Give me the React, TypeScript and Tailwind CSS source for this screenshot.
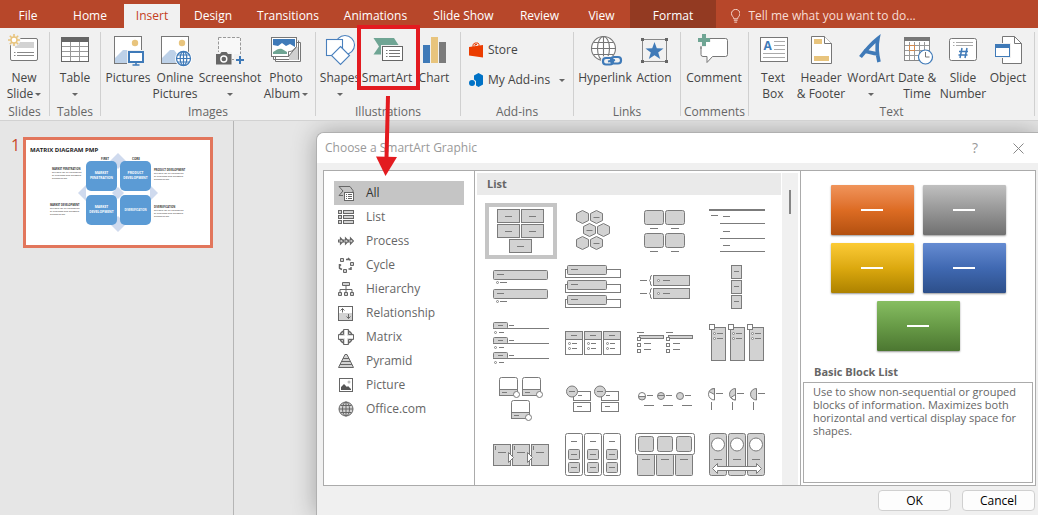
import React from 'react';

const LINE = '#7b7b7b';
const FILL = '#d2d2d2';
const BLUE = '#3f7ab8';
const TAN = '#e8c47d';
const GREEN = '#6fa594';

const steps = [0, 1, 2];

/* ---------- Drawing helpers ---------- */

type BoxProps = { x: number; y: number; w: number; h: number; r?: number; fill?: string };

const Box = ({ x, y, w, h, r = 0, fill = FILL }: BoxProps) => (
  <rect x={x + 0.5} y={y + 0.5} width={w} height={h} rx={r} fill={fill} stroke={LINE} />
);

const Dash = ({ x, y, w = 7 }: { x: number; y: number; w?: number }) => (
  <path d={`M${x} ${y + 0.5}h${w}`} stroke={LINE} fill="none" />
);

const Dot = ({ x, y }: { x: number; y: number }) => (
  <circle cx={x + 0.5} cy={y + 0.5} r="1" fill="#fff" stroke={LINE} strokeWidth="0.9" />
);

const Move = ({ x = 0, y = 0, children }: { x?: number; y?: number; children: React.ReactNode }) => (
  <g transform={`translate(${x} ${y})`}>{children}</g>
);

const Caret = () => (
  <svg width="6" height="3" viewBox="0 0 6 3" className="shrink-0">
    <path d="M0 0h6L3 3z" fill="#666" />
  </svg>
);

/* ---------- Ribbon icons, all on a 32px canvas ---------- */

const icons: Record<string, React.ReactNode> = {
  newSlide: (
    <>
      <rect x="2.5" y="4.5" width="27" height="22" rx="1.5" fill="#fff" stroke="#777" />
      <path d="M12 8h14v6H7v-2z" fill="#d2d2d2" />
      <path d="M6 18.5h1.5M9 18.5h17M6 21.5h1.5M9 21.5h17" stroke="#888" />
      <circle cx="6" cy="6" r="6.5" fill="#f1f1f1" />
      <path d="M6 0v12M0 6h12M1.8 1.8l8.4 8.4M10.2 1.8l-8.4 8.4" stroke={TAN} strokeWidth="1.6" />
      <circle cx="6" cy="6" r="3" fill="#fff" stroke={TAN} strokeWidth="1.4" />
    </>
  ),
  table: (
    <>
      <rect x="2.5" y="3.5" width="27" height="24" fill="#fff" stroke="#666" />
      <path d="M2 3h28v5H2z" fill="#666" />
      <path d="M3 12.5h26M3 17.5h26M3 22.5h26M11.5 8v19M20.5 8v19" stroke="#999" />
    </>
  ),
  pictures: (
    <>
      <rect x="2.5" y="2.5" width="27" height="27" fill="#fff" stroke="#777" />
      <circle cx="23" cy="9" r="3.2" fill={TAN} />
      <path d="M3 24l8-8h4l4 5v8H3z" fill="#bdd1e8" />
      <rect x="15" y="16" width="18" height="16" fill="#f1f1f1" />
      <rect x="17" y="18" width="14" height="10" fill="#fff" stroke={BLUE} strokeWidth="2" />
      <path d="M24 28v3M20.5 31h7" stroke={BLUE} strokeWidth="1.6" />
    </>
  ),
  online: (
    <>
      <rect x="2.5" y="2.5" width="27" height="27" fill="#fff" stroke="#777" />
      <circle cx="23" cy="9" r="3.2" fill={TAN} />
      <path d="M3 24l8-8h4l4 5v8H3z" fill="#bdd1e8" />
      <circle cx="24.5" cy="24.5" r="8.5" fill="#fff" />
      <circle cx="24.5" cy="24.5" r="7" fill="#fff" stroke={BLUE} strokeWidth="1.3" />
      <ellipse cx="24.5" cy="24.5" rx="3.3" ry="7" fill="none" stroke={BLUE} strokeWidth="1.2" />
      <path d="M24.5 17.5v14M17.5 24.5h14M18.5 21h12M18.5 28h12" stroke={BLUE} strokeWidth="1.2" />
    </>
  ),
  screenshot: (
    <>
      <rect x="4.5" y="3.5" width="22" height="22" fill="#f8f8f8" stroke="#999" strokeDasharray="3 1.5" />
      <path d="M1 18h17v13H1z" fill="#f1f1f1" />
      <path d="M2 20h4l1.500-2h5l1.500 2h3.500v10.500H2z" fill="#666" />
      <circle cx="9.8" cy="25" r="3" fill="#666" stroke="#fff" strokeWidth="1.4" />
      <path d="M20 20h12v12H20z" fill="#f1f1f1" />
      <path d="M26 22v8M22 26h8" stroke={BLUE} strokeWidth="2" />
    </>
  ),
  album: (
    <>
      <path d="M5.5 22v5.500h25v-19h-4M3.500 22v3.500h25v-19" fill="#fff" stroke="#777" />
      <rect x="1.5" y="3.5" width="25" height="19" fill="#fff" stroke="#777" />
      <path d="M3 5h22v8l-5-3-4 2-4-3-4 3-5-1z" fill={BLUE} />
      <path d="M3 18c4-3 7-4 9-3l5 3v2H3z" fill={GREEN} />
      <path d="M27 13h-1l-4 3-3 6v4h9V13z" fill="#d0d0d0" />
      <path d="M26.500 12.500c-3 4-4 5-8 5v5z" fill="#fff" stroke="#777" />
    </>
  ),
  shapes: (
    <g fill="#fff" stroke="#4a80bd" strokeWidth="1.1">
      <circle cx="21" cy="11" r="9.5" />
      <rect x="2.5" y="5.5" width="16" height="16" />
      <path d="M16.500 12.500l9 9-9 9-9-9z" />
    </g>
  ),
  smartart: (
    <>
      <path d="M2.500 4H23l5.500 8.500-5 8h-21L8 12.500z" fill={GREEN} />
      <rect x="10" y="11" width="23" height="17" fill="#f1f1f1" />
      <rect x="11.5" y="12.5" width="20" height="14" fill="#fff" stroke="#666" />
      <path d="M15 16.500h1.500M18 16.500h11M15 19.500h1.500M18 19.500h11M15 22.500h1.500M18 22.500h11" stroke="#777" />
    </>
  ),
  chart: (
    <>
      <path d="M5 11h7v18H5z" fill={BLUE} />
      <path d="M13 3h7v26h-7z" fill={TAN} />
      <path d="M21 8h7v21h-7z" fill="#7b7b7b" />
    </>
  ),
  hyperlink: (
    <>
      <g fill="none" stroke="#777" strokeWidth="1.1">
        <circle cx="14.5" cy="14.5" r="12" fill="#fff" />
        <ellipse cx="14.5" cy="14.5" rx="6" ry="12" />
        <path d="M14.500 2.500v24M2.500 14.500h24M4.500 8.500h20M4.500 20.500h20" />
      </g>
      <rect x="12" y="22" width="21" height="10" rx="4" fill="#f1f1f1" />
      <rect x="14" y="24" width="10" height="6.5" rx="3" fill="none" stroke={BLUE} strokeWidth="2.2" />
      <rect x="22" y="23" width="10" height="6.5" rx="3" fill="none" stroke={BLUE} strokeWidth="2.2" />
      <path d="M19 27.500l7-1.500" stroke={BLUE} strokeWidth="2" />
    </>
  ),
  action: (
    <>
      <rect x="4.5" y="5.5" width="24" height="22" fill="none" stroke="#888" />
      <path d="M3 4h3v3H3zM27 4h3v3h-3zM3 26h3v3H3zM27 26h3v3h-3z" fill="#666" />
      <path d="M16.500 8l2.300 6.200 6.700.2-5.300 4.100 2 6.500-5.700-3.800-5.700 3.800 2-6.500-5.300-4.100 6.700-.2z" fill={BLUE} />
    </>
  ),
  comment: (
    <>
      <path
        d="M5 4.500h22.500a2 2 0 012 2v14a2 2 0 01-2 2h-13l-5.500 6v-6H5a2 2 0 01-2-2v-14a2 2 0 012-2z"
        fill="#fff"
        stroke="#777"
      />
      <path d="M-1-1h14v14H-1z" fill="#f1f1f1" />
      <path d="M8 8h5v5H8z" fill="#fff" />
      <path d="M12 4.500h2M3 12v3" stroke="#777" />
      <path d="M6 0v12M0 6h12" stroke={GREEN} strokeWidth="4" />
    </>
  ),
  textBox: (
    <>
      <rect x="3.5" y="3.5" width="27" height="24" fill="#fff" stroke="#777" />
      <text x="6.5" y="16" fontSize="12" fontWeight="700" fill={BLUE}>
        A
      </text>
      <path d="M17 7.500h11M17 11.500h11M17 15.500h11M6 19.500h22M6 23.500h22" stroke="#aaa" />
    </>
  ),
  header: (
    <>
      <path d="M6.500 2.500h13l7 7v20h-20z" fill="#fff" stroke="#777" />
      <path d="M19.500 2.500v7h7" fill="#fff" stroke="#777" />
      <path d="M9 5h8v5H9zM9 22h15v5H9z" fill={TAN} />
    </>
  ),
  wordart: (
    <path
      d="M5.500 23C11 16 16 10 23 4.500 21.500 12 22 20 24 28M9 17c5 1 9 2.500 14 3"
      fill="none"
      stroke={BLUE}
      strokeWidth="3.6"
    />
  ),
  date: (
    <>
      <rect x="3.5" y="3.5" width="25" height="23" fill="#fff" stroke="#888" />
      <path d="M3 3h26v4H3z" fill="#777" />
      <path d="M4 11.500h24M4 16.500h24M4 21.500h24M8.500 8v18M13.500 8v18M18.500 8v18M23.500 8v18" stroke="#999" />
      <rect x="8.5" y="11.5" width="5" height="5" fill="#fff" stroke="#d58a4e" />
      <circle cx="24.5" cy="23" r="7" fill="#fff" stroke={BLUE} strokeWidth="1.2" />
      <path d="M24.500 18v5h4" fill="none" stroke="#777" />
    </>
  ),
  number: (
    <>
      <rect x="2.5" y="4.5" width="27" height="22" rx="2" fill="#fff" stroke="#777" />
      <path d="M6 8.500h1.500M9 8.500h17M6 11.500h1.500M9 11.500h17" stroke="#aaa" />
      <path d="M15 14l-2 10M20 14l-2 10M12 17.500h9M11.500 21h9" stroke={BLUE} strokeWidth="1.5" />
    </>
  ),
  object: (
    <>
      <path d="M10.500 2.500h12l7 7v20h-19z" fill="#fff" stroke="#777" />
      <path d="M22.500 2.500v7h7" fill="none" stroke="#777" />
      <rect x="2" y="9" width="17" height="15" fill="#f1f1f1" />
      <rect x="3.5" y="10.5" width="14" height="12" fill="#fff" stroke={BLUE} />
      <path d="M3 10h15v4H3z" fill={BLUE} />
    </>
  ),
};

/* ---------- Ribbon ---------- */

const tabs = [
  { name: 'File', width: 'w-[56px]' },
  { name: 'Home', width: 'w-[68px]' },
  { name: 'Insert', width: 'w-[56px]' },
  { name: 'Design', width: 'w-[66px]' },
  { name: 'Transitions', width: 'w-[84px]' },
  { name: 'Animations', width: 'w-[91px]' },
  { name: 'Slide Show', width: 'w-[85px]' },
  { name: 'Review', width: 'w-[67px]' },
  { name: 'View', width: 'w-[57px]' },
  { name: 'Format', width: 'w-[86px]' },
];

const tabStyle = (name: string) => {
  if (name === 'Insert') return 'h-6 bg-[#f1f1f1] text-[#c43e1c]';
  if (name === 'Format') return 'h-7 bg-[#933a22] pt-1 text-white';
  return 'h-6 text-white';
};

type ToolProps = { icon: string; first: string; second?: string; caret?: boolean; width: string };

const Tool = ({ icon, first, second, caret, width }: ToolProps) => (
  <button className={`flex shrink-0 flex-col items-center whitespace-nowrap leading-4 ${width}`}>
    <svg width="32" height="32" viewBox="0 0 32 32" className="mb-1 overflow-visible">
      {icons[icon]}
    </svg>
    <span>{first}</span>
    <span className="flex h-4 items-center gap-0.5">
      {second}
      {caret && <Caret />}
    </span>
  </button>
);

type GroupProps = { name: string; width: string; children: React.ReactNode };

const Group = ({ name, width, children }: GroupProps) => (
  <section className={`shrink-0 pt-1 ${width}`}>
    <div className="h-[84px] border-r border-[#d0d0d0]">
      <div className="flex h-[72px] pt-0.5">{children}</div>
      <div className="text-center leading-4 text-[#666]">{name}</div>
    </div>
  </section>
);

const Ribbon = () => (
  <div className="flex h-[93px] border-b border-[#d2d2d2] bg-[#f1f1f1] text-[#444]">
    <Group name="Slides" width="w-[50px]">
      <Tool icon="newSlide" first="New" second="Slide" caret width="w-[48px]" />
    </Group>
    <Group name="Tables" width="w-[51px]">
      <Tool icon="table" first="Table" caret width="w-[50px]" />
    </Group>
    <Group name="Images" width="w-[215px]">
      <Tool icon="pictures" first="Pictures" width="w-[54px]" />
      <Tool icon="online" first="Online" second="Pictures" width="w-[40px]" />
      <Tool icon="screenshot" first="Screenshot" caret width="w-[70px]" />
      <Tool icon="album" first="Photo" second="Album" caret width="w-[42px]" />
    </Group>
    <Group name="Illustrations" width="w-[145px]">
      <Tool icon="shapes" first="Shapes" caret width="w-[48px]" />
      <Tool icon="smartart" first="SmartArt" width="w-[46px]" />
      <Tool icon="chart" first="Chart" width="w-[48px]" />
    </Group>
    <Group name="Add-ins" width="w-[113px]">
      <div className="flex w-full flex-col gap-3.5 px-2 pt-2">
        <button className="flex items-center gap-1 leading-4">
          <svg width="15" height="16" viewBox="0 0 15 16">
            <path d="M0 5l14-2v12.500L0 13.500z" fill="#eb3c00" />
            <path d="M4 5V2.500L6 1h3l1 1.500V4M6 4V2.500h2" fill="none" stroke="#eb3c00" />
          </svg>
          Store
        </button>
        <button className="flex items-center gap-1 whitespace-nowrap leading-4">
          <svg width="15" height="16" viewBox="0 0 15 16">
            <path d="M5 3.500L9.500 1 14 3.500v9L9.500 15 7 13.500V9L5 7.500z" fill="#0072c6" />
            <circle cx="3" cy="11" r="3" fill="#0072c6" />
          </svg>
          <span className="flex-1 text-left">My Add-ins</span>
          <Caret />
        </button>
      </div>
    </Group>
    <Group name="Links" width="w-[107px]">
      <Tool icon="hyperlink" first="Hyperlink" width="w-[62px]" />
      <Tool icon="action" first="Action" width="w-[36px]" />
    </Group>
    <Group name="Comments" width="w-[68px]">
      <Tool icon="comment" first="Comment" width="w-[66px]" />
    </Group>
    <Group name="Text" width="w-[286px]">
      <Tool icon="textBox" first="Text" second="Box" width="w-[48px]" />
      <Tool icon="header" first="Header" second="& Footer" width="w-[48px]" />
      <Tool icon="wordart" first="WordArt" caret width="w-[52px]" />
      <Tool icon="date" first="Date &" second="Time" width="w-[40px]" />
      <Tool icon="number" first="Slide" second="Number" width="w-[52px]" />
      <Tool icon="object" first="Object" width="w-[38px]" />
    </Group>
  </div>
);

/* ---------- Slide thumbnail ---------- */

const quadrants = [
  { x: 60, y: 21, lines: ['MARKET', 'PENETRATION'] },
  { x: 94, y: 21, lines: ['PRODUCT', 'DEVELOPMENT'] },
  { x: 60, y: 55, lines: ['MARKET', 'DEVELOPMENT'] },
  { x: 94, y: 55, lines: ['DIVERSIFICATION'] },
];

const notes = [
  { x: 26, y: 30, title: 'MARKET PENETRATION' },
  { x: 128, y: 31, title: 'PRODUCT DEVELOPMENT' },
  { x: 24, y: 66, title: 'MARKET DEVELOPMENT' },
  { x: 128, y: 68, title: 'DIVERSIFICATION' },
];

const SlideThumb = () => (
  <svg viewBox="0 0 184 105" className="block w-full bg-white">
    <text x="4" y="12" fontSize="6" fontWeight="700" fill="#222">
      MATRIX DIAGRAM PMP
    </text>
    <path d="M92 13l8 8-8 8-8-8zM92 76l8 8-8 8-8-8zM60 45l-8 8 8 8zM124 45l8 8-8 8z" fill="#cfdaee" />
    <path d="M92 47l6 6-6 6-6-6z" fill="#cfdaee" />
    <text x="75" y="20" fontSize="3" fontWeight="700" fill="#333">
      FIRST
    </text>
    <text x="106" y="20" fontSize="3" fontWeight="700" fill="#333">
      CORE
    </text>
    {quadrants.map((q) => (
      <g key={`${q.x}-${q.y}`}>
        <rect x={q.x} y={q.y} width="31" height="30" rx="5" fill="#5b9bd5" />
        {q.lines.map((line, i) => (
          <text
            key={line}
            x={q.x + 15.5}
            y={q.y + (q.lines.length === 1 ? 16 : 13 + i * 5)}
            fontSize={q.lines.length === 1 ? 2.6 : 3.3}
            fontWeight="700"
            textAnchor="middle"
            fill="#fff"
          >
            {line}
          </text>
        ))}
      </g>
    ))}
    {notes.map((n) => (
      <g key={n.title} fontSize="2.5" fill="#333">
        <text x={n.x} y={n.y} fontWeight="700">
          {n.title}
        </text>
        <text x={n.x} y={n.y + 3.2}>Suitable for all categories</text>
        <text x={n.x} y={n.y + 6.2}>of business and personal</text>
        <text x={n.x} y={n.y + 9.2}>presentation</text>
      </g>
    ))}
  </svg>
);

/* ---------- Dialog: categories ---------- */

const categories: { name: string; icon: React.ReactNode }[] = [
  {
    name: 'All',
    icon: (
      <>
        <path d="M1 1.500h11l3 4v3M1 1.500l4 4.500-4 4.500h4" fill="none" stroke="#666" />
        <rect x="6.5" y="7.5" width="9" height="8" fill="#fff" stroke="#666" />
        <path d="M8 9.500h1M10 9.500h4M8 11.500h1M10 11.500h4M8 13.500h1M10 13.500h4" stroke="#666" />
      </>
    ),
  },
  {
    name: 'List',
    icon: [1.5, 6.5, 11.5].map((y) => (
      <g key={y} fill={FILL} stroke="#666">
        <rect x="0.5" y={y} width="3" height="3" />
        <rect x="5.5" y={y} width="10" height="3" />
      </g>
    )),
  },
  {
    name: 'Process',
    icon: [0.5, 5.5, 10.5].map((x) => (
      <path key={x} d={`M${x} 7h2V5l3 3-3 3V9h-2z`} fill={FILL} stroke="#666" strokeWidth="1.2" />
    )),
  },
  {
    name: 'Cycle',
    icon: (
      <g fill={FILL} stroke="#666">
        <path d="M2.500 1.500h3v3h-3zM12.500 5.500h3v3h-3zM5.500 12.500h3v3h-3z" />
        <path d="M8 2.500h3M10 1l2.500 2.500M13 10v3M10.500 12h3M1 11l3 1.500M1.500 7v4M3 7.500L1.500 9" strokeWidth="1.5" />
      </g>
    ),
  },
  {
    name: 'Hierarchy',
    icon: (
      <g fill={FILL} stroke="#666">
        <path d="M8 5v6M2 11V8.500h12V11" fill="none" />
        <path d="M4.500 1.500h7v3h-7zM.5 11.500h3v3h-3zM6.500 11.500h3v3h-3zM12.500 11.500h3v3h-3z" />
      </g>
    ),
  },
  {
    name: 'Relationship',
    icon: (
      <>
        <rect x="0.5" y="1.5" width="14" height="14" fill="#fff" stroke="#666" />
        <path d="M1 8h13v7H1z" fill={FILL} />
        <path d="M4.500 7.500v-4M2.500 5.500l2-2 2 2M10.500 9v4.500M8.500 11.500l2 2 2-2" fill="none" stroke="#666" />
      </>
    ),
  },
  {
    name: 'Matrix',
    icon: (
      <>
        <path d="M4.500 2.500h7l2 2v7l-2 2h-7l-2-2v-7z" fill={FILL} stroke="#666" strokeWidth="1.4" />
        <path d="M5.500.500h5v5h5v5h-5v5h-5v-5h-5v-5h5z" fill={FILL} stroke="#666" />
        <path d="M8 1v14M1 8h14" stroke="#fff" strokeWidth="2.4" />
      </>
    ),
  },
  {
    name: 'Pyramid',
    icon: (
      <>
        <path d="M7 1.500h2l6.500 13H.5z" fill={FILL} stroke="#666" />
        <path d="M5 5.500h6M4 8.500h8M2 11.500h12" stroke="#666" />
      </>
    ),
  },
  {
    name: 'Picture',
    icon: (
      <>
        <rect x="1.5" y="1.5" width="13" height="13" fill="#fff" stroke="#666" />
        <circle cx="11" cy="5" r="1.5" fill="#bbb" />
        <path d="M3 13V10l3-3 3 3 1-1 3 3v1z" fill="#555" />
      </>
    ),
  },
  {
    name: 'Office.com',
    icon: (
      <g fill="none" stroke="#666">
        <circle cx="8" cy="8" r="7" fill={FILL} />
        <ellipse cx="8" cy="8" rx="3.5" ry="7" />
        <path d="M8 1v14M1 8h14M2.500 4.500h11M2.500 11.500h11" />
      </g>
    ),
  },
];

/* ---------- Dialog: layout gallery, each drawing is 72x56 ---------- */

const layouts: { name: string; art: React.ReactNode }[] = [
  {
    name: 'Basic Block List',
    art: [[12, 6], [36, 6], [12, 21], [36, 21], [24, 36]].map(([x, y]) => (
      <Move key={`${x}-${y}`} x={x} y={y}>
        <Box x={0} y={0} w={22} h={13} />
        <Dash x={8} y={7} />
      </Move>
    )),
  },
  {
    name: 'Alternating Hexagons',
    art: [[25.5, 14, 0], [39.5, 14, 1], [32.5, 27, 1], [46.5, 27, 0], [25.5, 40, 0], [39.5, 40, 1]].map(
      ([x, y, dash]) => (
        <Move key={`${x}-${y}`} x={x} y={y}>
          <path d="M0-6.500l6 3v7l-6 3-6-3v-7z" fill={FILL} stroke={LINE} />
          {dash === 1 && <Dash x={-3} y={0} w={6} />}
        </Move>
      ),
    ),
  },
  {
    name: 'Picture Caption List',
    art: [[15, 7], [36, 7], [15, 30], [36, 30]].map(([x, y]) => (
      <Move key={`${x}-${y}`} x={x} y={y}>
        <Box x={0} y={0} w={19} h={14} r={2} />
        <Dash x={6} y={18} w={8} />
      </Move>
    )),
  },
  {
    name: 'Lined List',
    art: (
      <>
        <path d="M8 7h56" stroke={LINE} strokeWidth="2" />
        <Dash x={10} y={12} />
        <Dash x={22} y={13} />
        <Dash x={19} y={20} w={45} />
        <Dash x={22} y={28} />
        <Dash x={19} y={35} w={45} />
        <Dash x={22} y={42} />
        <Dash x={19} y={48} w={45} />
      </>
    ),
  },
  {
    name: 'Vertical Bullet List',
    art: [11, 30].map((y) => (
      <Move key={y} y={y}>
        <Box x={8} y={0} w={54} h={9} r={1} />
        <Dash x={12} y={4} />
        <Dot x={12} y={12} />
        <Dash x={15} y={12} />
      </Move>
    )),
  },
  {
    name: 'Vertical Box List',
    art: steps.map((i) => (
      <Move key={i} y={i * 15}>
        <Box x={8} y={10} w={55} h={8} fill="#fff" />
        <Box x={10} y={6} w={39} h={9} r={1} />
        <Dash x={14} y={10} />
      </Move>
    )),
  },
  {
    name: 'Vertical Bracket List',
    art: [0, 13].map((y) => (
      <Move key={y} y={y}>
        <Dash x={11} y={21} />
        <path d="M23 16.500q-1.500 0-1.500 1.500v2l-1 1.500 1 1.500v2q0 1.500 1.500 1.500" fill="none" stroke={LINE} />
        <Box x={24} y={16} w={36} h={10} />
        <Dot x={29} y={21} />
        <Dash x={34} y={21} />
      </Move>
    )),
  },
  {
    name: 'Varying Width List',
    art: steps.map((i) => (
      <Move key={i} y={i * 15}>
        <Box x={30} y={6} w={10} h={13} />
        <Dash x={33} y={12} w={5} />
      </Move>
    )),
  },
  {
    name: 'Tab List',
    art: steps.map((i) => (
      <Move key={i} y={i * 15}>
        <Box x={8} y={7} w={14} h={6} r={1} />
        <Dash x={8} y={13} w={56} />
        <Dash x={13} y={10} w={5} />
        <Dash x={24} y={10} w={5} />
        <Dot x={10} y={17} />
        <Dash x={14} y={17} w={5} />
      </Move>
    )),
  },
  {
    name: 'Horizontal Bullet List',
    art: steps.map((i) => (
      <Move key={i} x={i * 19}>
        <Box x={8} y={16} w={17} h={23} fill="#fff" />
        <Box x={8} y={16} w={17} h={8} />
        <Dash x={14} y={20} w={6} />
        <Dot x={12} y={28} />
        <Dash x={15} y={28} w={5} />
        <Dot x={12} y={33} />
        <Dash x={15} y={33} w={5} />
      </Move>
    )),
  },
  {
    name: 'Square Accent List',
    art: [0, 29].map((x) => (
      <Move key={x} x={x}>
        <Dash x={8} y={17} />
        <Box x={10} y={20} w={24} h={3} />
        <Box x={8} y={22} w={3} h={3} fill="#fff" />
        <Box x={8} y={28} w={3} h={3} fill="#fff" />
        <Box x={8} y={34} w={3} h={3} fill="#fff" />
        <Dash x={15} y={28} />
        <Dash x={15} y={34} />
      </Move>
    )),
  },
  {
    name: 'Picture Accent List',
    art: steps.map((i) => (
      <Move key={i} x={i * 19}>
        <Box x={10} y={12} w={14} h={33} />
        <Box x={8} y={9} w={5} h={5} fill="#fff" />
        <Dot x={13} y={18} />
        <Dash x={16} y={18} w={6} />
        <Dot x={13} y={23} />
        <Dash x={16} y={23} w={6} />
      </Move>
    )),
  },
  {
    name: 'Bending Picture Accent List',
    art: [[0, 0], [23, 0], [12, 23]].map(([x, y]) => (
      <Move key={x} x={x} y={y}>
        <Box x={14} y={6} w={18} h={18} r={2} fill="#fff" />
        <Box x={14} y={18} w={18} h={6} />
        <Dash x={17} y={21} w={5} />
        <circle cx="31.5" cy="23.5" r="3" fill="#fff" stroke={LINE} />
      </Move>
    )),
  },
  {
    name: 'Stacked List',
    art: [0, 28].map((x) => (
      <Move key={x} x={x}>
        <Box x={16} y={20} w={17} h={9} fill="#fff" />
        <Box x={16} y={31} w={17} h={9} fill="#fff" />
        <circle cx="15" cy="20.5" r="5.5" fill={FILL} stroke={LINE} />
        <Dash x={12} y={20} w={6} />
        <Dash x={21} y={24} w={4} />
        <Dash x={20} y={35} w={5} />
      </Move>
    )),
  },
  {
    name: 'Increasing Circle Process',
    art: steps.map((i) => (
      <Move key={i} x={i * 19}>
        <circle cx="13" cy="25" r="3.5" fill={i === 0 ? '#fff' : FILL} stroke={LINE} />
        {i === 0 && <path d="M9.500 25.500a3.500 3.500 0 007 0z" fill={FILL} stroke={LINE} />}
        {i === 1 && <Dash x={10} y={24} w={6} />}
        <Dash x={18} y={24} w={6} />
        <Dash x={15} y={34} w={10} />
      </Move>
    )),
  },
  {
    name: 'Pie Process',
    art: steps.map((i) => (
      <Move key={i} x={i * 21}>
        <path d="M13.500 17.500a6 5.750 0 000 11.500z" fill={i === 0 ? '#fff' : FILL} stroke={LINE} />
        {i === 0 && <path d="M13.500 17.500q-4 0-5.500 3l5.500 3z" fill={FILL} stroke={LINE} />}
        {i === 1 && <path d="M13.500 23.500l-4.500 3q2 2.500 4.500 2.500z" fill="#fff" stroke={LINE} />}
        <Dash x={15} y={22} />
        <path d="M10.500 31v8" stroke={LINE} />
      </Move>
    )),
  },
  {
    name: 'Detailed Process',
    art: (
      <>
        {steps.map((i) => (
          <Move key={i} x={i * 19}>
            <Box x={8} y={17} w={17} h={21} />
            <path d="M10.500 19v4" stroke={LINE} />
            <Dash x={13} y={25} w={8} />
          </Move>
        ))}
        <path d="M23.500 25.500l5 5-5 5zM42.500 25.500l5 5-5 5z" fill="#fff" stroke={LINE} />
      </>
    ),
  },
  {
    name: 'Grouped List',
    art: steps.map((i) => (
      <Move key={i} x={i * 19}>
        <Box x={8} y={6} w={17} h={42} r={2} fill="#fff" />
        <Dash x={14} y={14} w={6} />
        <Box x={11} y={22} w={11} h={10} r={1} />
        <Box x={11} y={35} w={11} h={10} r={1} />
        <Dash x={14} y={27} w={6} />
        <Dash x={14} y={40} w={6} />
      </Move>
    )),
  },
  {
    name: 'Horizontal Picture List',
    art: (
      <>
        <Box x={6} y={6} w={59} h={21} r={2} fill="#fff" />
        {steps.map((i) => (
          <Move key={i} x={i * 19}>
            <Box x={8} y={27} w={17} h={21} r={1} />
            <Box x={9} y={9} w={15} h={15} r={2} />
            <Dash x={13} y={32} w={8} />
          </Move>
        ))}
      </>
    ),
  },
  {
    name: 'Continuous Picture List',
    art: (
      <>
        {steps.map((i) => (
          <Move key={i} x={i * 19}>
            <Box x={8} y={6} w={17} h={42} r={2} />
            <circle cx="17" cy="17.5" r="6.5" fill="#fff" stroke={LINE} />
            <Dash x={13} y={32} w={8} />
          </Move>
        ))}
        <path d="M11.500 41.500l5-5v3h39v-3l5 5-5 5v-3h-39v3z" fill="#fff" stroke={LINE} />
      </>
    ),
  },
];

/* ---------- Dialog: preview ---------- */

const previewBlocks = [
  'from-[#f0945a] via-[#dd6c23] to-[#b3500f]',
  'from-[#c0c0c0] via-[#979797] to-[#717171]',
  'from-[#fccb34] via-[#dca90f] to-[#ad8200]',
  'from-[#668cd2] via-[#4069b2] to-[#2d4f8a]',
  'from-[#87be62] via-[#689b47] to-[#4c7731]',
];

const SmartArtDialog = () => (
  <div
    role="dialog"
    aria-labelledby="dialog-title"
    className="flex flex-1 flex-col overflow-hidden rounded-tl-lg border-l border-t border-[#b0b0b0] bg-[#f0f0f0] shadow-[0_0_24px_rgba(0,0,0,0.3)]"
  >
    <div className="flex h-[30px] items-center bg-white pl-2 pr-3 text-[#999]">
      <h2 id="dialog-title" className="flex-1">
        Choose a SmartArt Graphic
      </h2>
      <button aria-label="Help" className="mr-7 w-4 text-sm">
        ?
      </button>
      <button aria-label="Close" className="p-0.5">
        <svg width="11" height="11" viewBox="0 0 11 11">
          <path d="M.5.5l10 10M10.5.5l-10 10" stroke="#888" />
        </svg>
      </button>
    </div>

    <div className="mx-1.5 mr-0.5 mt-[7px] flex flex-1 border border-[#ababab] bg-white text-[#666]">
      {/* Categories */}
      <nav className="w-[151px] shrink-0 border-r border-[#ababab] p-2.5">
        {categories.map((cat) => (
          <button
            key={cat.name}
            className={`flex h-6 w-full items-center gap-3 px-1 text-left ${
              cat.name === 'All' ? 'bg-[#c5c5c5] text-[#333]' : ''
            }`}
          >
            <svg width="16" height="16" viewBox="0 0 16 16" className="shrink-0">
              {cat.icon}
            </svg>
            {cat.name}
          </button>
        ))}
      </nav>

      {/* Gallery */}
      <div className="flex w-[326px] shrink-0 gap-px border-r border-[#ababab] p-0.5 pb-0">
        <div className="flex-1">
          <h3 className="h-[22px] bg-[#eaeaea] px-2.5 text-[11px] font-bold leading-[22px]">List</h3>
          <div className="grid grid-cols-4 px-2 pt-2">
            {layouts.map((layout, i) => (
              <button
                key={layout.name}
                aria-label={layout.name}
                className={i === 0 ? 'ring-4 ring-inset ring-[#c5c5c5]' : ''}
              >
                <svg width="72" height="56" viewBox="0 0 72 56">
                  {layout.art}
                </svg>
              </button>
            ))}
          </div>
        </div>
        <div className="flex w-4 justify-center bg-[#f0f0f0] pt-[17px]">
          <div className="h-6 w-0.5 bg-[#858585]" />
        </div>
      </div>

      {/* Preview */}
      <div className="flex flex-1 flex-col p-0.5">
        <div className="mt-3 flex flex-wrap justify-center gap-x-[9px] gap-y-2 px-6">
          {previewBlocks.map((gradient) => (
            <div
              key={gradient}
              className={`flex h-[50px] w-[83px] items-center justify-center rounded-[1px] bg-gradient-to-b shadow-[0_1px_2px_rgba(0,0,0,0.4)] ${gradient}`}
            >
              <span className="h-0.5 w-[22px] bg-white" />
            </div>
          ))}
        </div>
        <h3 className="mt-[13px] pl-[11px] text-[11px] font-bold leading-4">Basic Block List</h3>
        <p className="mt-0.5 flex-1 border border-[#ababab] px-[9px] py-0.5 text-[11px] leading-[13px]">
          Use to show non-sequential or grouped blocks of information. Maximizes both horizontal and vertical display
          space for shapes.
        </p>
      </div>
    </div>

    <div className="flex justify-end gap-[11px] px-[3px] py-1 text-black">
      <button className="h-[21px] w-[73px] rounded border border-[#d0d0d0] bg-[#fdfdfd]">OK</button>
      <button className="h-[21px] w-[73px] rounded border border-[#d0d0d0] bg-[#fdfdfd]">Cancel</button>
    </div>
  </div>
);

const App: React.FC = () => {
  return (
    <div className="relative flex min-h-screen flex-col overflow-hidden bg-[#e6e6e6] font-['Open_Sans','Noto_Sans',sans-serif] text-xs">
      {/* Tab strip */}
      <header className="flex h-7 bg-[#b7472a]">
        {tabs.map((tab) => (
          <button
            key={tab.name}
            className={`shrink-0 self-end whitespace-nowrap text-center ${tab.width} ${tabStyle(tab.name)}`}
          >
            {tab.name}
          </button>
        ))}
        <label className="flex flex-1 items-center gap-2 pl-[15px] pt-1 text-[#f8dcd4]">
          <svg width="10" height="14" viewBox="0 0 10 14" fill="none" stroke="currentColor">
            <path d="M3 10c0-2-2.500-3-2.500-5.500a4.500 4.500 0 019 0C9.500 7 7 8 7 10zM3 11.500h4M3.500 13.500h3" />
          </svg>
          <input
            aria-label="Tell me what you want to do"
            placeholder="Tell me what you want to do..."
            className="w-full bg-transparent outline-none placeholder:text-[#f8dcd4]"
          />
        </label>
      </header>

      <Ribbon />

      {/* Workspace */}
      <div className="flex flex-1">
        <aside className="flex w-[234px] shrink-0 items-start border-r border-[#b5b5b5] pl-[11px] pt-4">
          <span className="w-3 text-base leading-4 text-[#c9492c]">1</span>
          <div className="w-[190px] border-[3px] border-[#e2765c]">
            <SlideThumb />
          </div>
        </aside>
        <main className="flex flex-1 overflow-hidden pl-[82px] pt-[11px]">
          <SmartArtDialog />
        </main>
      </div>

      {/* Callout over the SmartArt button */}
      <svg width="63" height="152" viewBox="0 0 63 152" className="pointer-events-none absolute left-[357px] top-[25px]">
        <rect x="2" y="2" width="59" height="61" fill="none" stroke="#e31b20" strokeWidth="4" />
        <path d="M31 71L29.500 133" stroke="#e31b20" strokeWidth="4" />
        <path d="M19 131.500l21 .5-11.500 19z" fill="#e31b20" />
      </svg>
    </div>
  );
};

export default App;
